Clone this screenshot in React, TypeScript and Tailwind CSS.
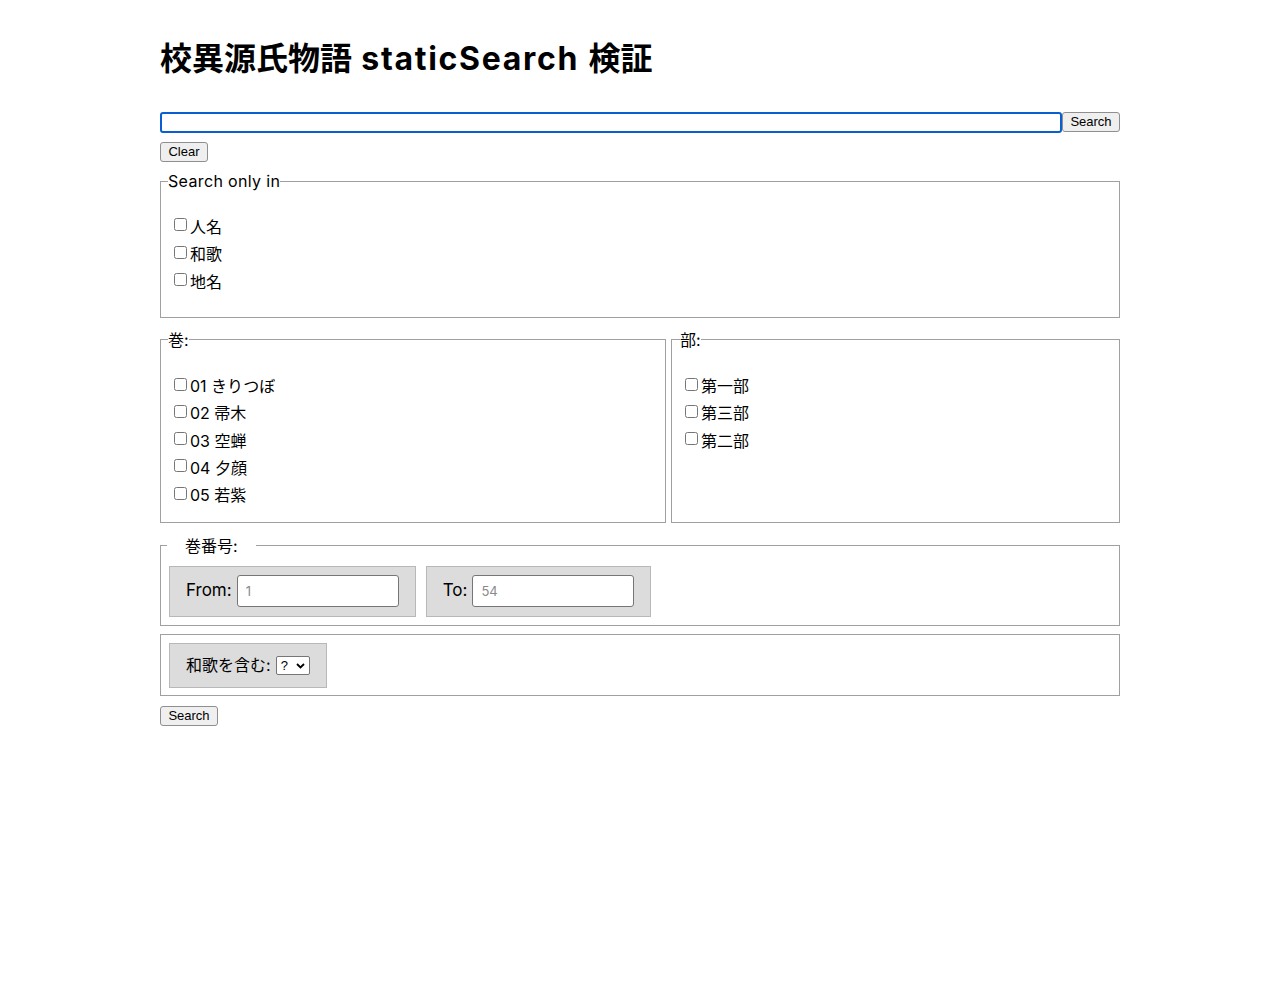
import React from 'react';

const Check = ({ label, h }: { label: string; h: string }) => (
  <label className={'flex items-center ' + h}>
    <input type="checkbox" className="ml-[6px] mr-[3px] h-[13px] w-[13px] -translate-y-[2px]" />
    <span>{label}</span>
  </label>
);

const maki = ['01 きりつぼ', '02 帚木', '03 空蝉', '04 夕顔', '05 若紫'];
const bu = ['第一部', '第三部', '第二部'];

const btn =
  "h-[20px] rounded-[3px] border border-[#8f8f8f] bg-[#efefef] px-[7px] font-['Liberation_Sans',Arial,sans-serif] text-[13px] leading-[18px] text-black";

export default function App() {
  return (
    <div className="min-h-[1000px] bg-white font-['Inter','Noto_Sans_CJK_JP',sans-serif] text-[16px] text-black">
      <div className="mx-auto w-[960px] pt-[35px]">
        <h1 className="text-[32px] font-bold leading-[48px]">
          校異源氏物語<span className="tracking-[1.7px]"> staticSearch </span>検証
        </h1>

        <div className="mt-[29px] flex items-start">
          <input className="h-[21px] flex-1 rounded-[3px] border-2 border-[#0a5fd0] outline-none" />
          <button className={btn + ' w-[58px]'}>Search</button>
        </div>
        <button className={btn + ' mt-[9px] w-[48px]'}>Clear</button>

        <fieldset className="mt-[7px] border border-[#a0a0a0] pl-[7px] pr-[7px]">
          <legend className="px-0 leading-[24px] tracking-[0.35px]">Search only in</legend>
          <div className="flex flex-col pt-[20px] pb-[21px]">
            <Check h="h-[27.5px]" label="人名" />
            <Check h="h-[27.5px]" label="和歌" />
            <Check h="h-[27.5px]" label="地名" />
          </div>
        </fieldset>

        <div className="mt-[10px] flex gap-[5px]">
          <fieldset className="w-[506px] border border-[#a0a0a0] px-[7px]">
            <legend className="px-0 leading-[24px]">巻:</legend>
            <div className="flex flex-col pt-[21px] pb-[13px]">
              {maki.map((m) => (
                <Check h="h-[27.25px]" key={m} label={m} />
              ))}
            </div>
          </fieldset>
          <fieldset className="flex-1 border border-[#a0a0a0] px-[7px]">
            <legend className="ml-[1px] px-0 leading-[24px]">部:</legend>
            <div className="flex flex-col pt-[21px]">
              {bu.map((b) => (
                <Check h="h-[27.25px]" key={b} label={b} />
              ))}
            </div>
          </fieldset>
        </div>

        <fieldset className="mt-[11px] border border-[#a0a0a0] px-[8px] pb-[8px]">
          <legend className="-ml-[2px] px-[18px] leading-[24px]">巻番号:</legend>
          <div className="flex gap-[10px] pt-[8px]">
            <div className="flex items-center gap-[5px] border border-[#b8b8b8] bg-[#dcdcdc] px-[16px] pt-[8px] pb-[9px]">
              <span className="text-[17px]">From:</span>
              <input
                placeholder="1"
                className="h-[32px] w-[162px] rounded-[3px] border border-[#767676] bg-white px-[8px] text-[13px] outline-none placeholder:text-[#8a8a8a]"
              />
            </div>
            <div className="flex items-center gap-[5px] border border-[#b8b8b8] bg-[#dcdcdc] px-[16px] pt-[8px] pb-[9px]">
              <span className="text-[17px]">To:</span>
              <input
                placeholder="54"
                className="h-[32px] w-[162px] rounded-[3px] border border-[#767676] bg-white px-[8px] text-[13px] outline-none placeholder:text-[#8a8a8a]"
              />
            </div>
          </div>
        </fieldset>

        <fieldset className="mt-[8px] border border-[#a0a0a0] px-[8px] pt-[8px] pb-[7px]">
          <div className="flex">
            <div className="flex h-[45px] items-center gap-[5px] border border-[#b8b8b8] bg-[#dcdcdc] px-[16px]">
              <span>和歌を含む:</span>
              <div className="relative flex">
                <select className="h-[19px] w-[34px] appearance-none rounded-[2px] border border-[#767676] bg-white pl-[4px] font-['Liberation_Sans',Arial,sans-serif] text-[13px] leading-[17px] outline-none">
                  <option>?</option>
                  <option>はい</option>
                  <option>いいえ</option>
                </select>
                <svg
                  className="pointer-events-none absolute right-[5px] top-[7px]"
                  width="9"
                  height="6"
                  viewBox="0 0 9 6"
                  fill="none"
                  stroke="#000"
                  strokeWidth="1.8"
                >
                  <path d="M1 1 L4.5 4.5 L8 1" />
                </svg>
              </div>
            </div>
          </div>
        </fieldset>

        <button className={btn + ' mt-[10px] w-[58px]'}>Search</button>
      </div>
    </div>
  );
}
